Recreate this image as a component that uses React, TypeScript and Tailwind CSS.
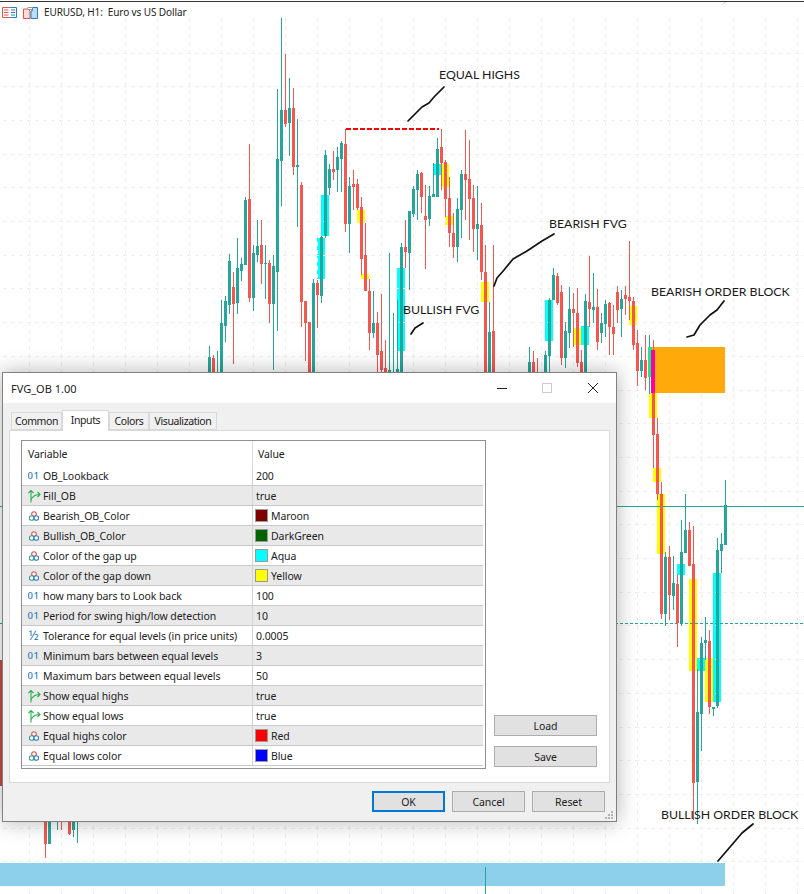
import React from "react";

const UI_FONT = "font-['Noto_Sans','Liberation_Sans',sans-serif]";
const RED = "#f4574f";
const TEAL = "#26a69a";

// x, high, low, body top, body bottom, colour (r / g)
type Candle = [number, number, number, number, number, "r" | "g"];

const candles: Candle[] = [
  [45, 800, 858, 800, 844, "r"], [49, 800, 844, 800, 844, "g"], [57, 800, 830, 0, 0, "g"], [61, 800, 830, 0, 0, "r"],
  [69, 800, 835, 800, 834, "r"], [73, 800, 837, 800, 830, "g"], [77, 800, 843, 0, 0, "g"],
  [209, 346, 400, 357, 400, "g"], [213, 355, 400, 358, 400, "r"], [217, 351, 400, 0, 0, "g"],
  [221, 300, 400, 323, 400, "g"], [225, 296, 342, 301, 326, "g"], [229, 254, 314, 261, 305, "g"],
  [233, 272, 364, 287, 304, "r"], [237, 238, 314, 268, 303, "g"], [241, 258, 281, 264, 271, "g"],
  [245, 197, 265, 200, 265, "g"], [249, 144, 302, 199, 298, "r"], [253, 245, 311, 253, 298, "g"],
  [257, 220, 262, 246, 255, "g"], [261, 220, 284, 245, 264, "r"], [265, 245, 299, 263, 264, "g"],
  [269, 260, 323, 263, 304, "r"], [273, 255, 370, 266, 304, "g"], [277, 89, 331, 159, 272, "g"],
  [281, 18, 206, 110, 161, "g"], [285, 54, 127, 110, 124, "r"], [289, 78, 156, 108, 123, "g"],
  [293, 88, 175, 108, 167, "r"], [297, 119, 227, 165, 167, "g"], [301, 182, 327, 185, 302, "r"],
  [305, 301, 361, 301, 323, "r"], [309, 322, 400, 322, 400, "r"], [313, 279, 400, 283, 400, "g"],
  [317, 280, 328, 283, 295, "r"], [321, 236, 303, 237, 296, "g"], [325, 150, 238, 155, 236, "g"],
  [329, 164, 195, 169, 188, "g"], [333, 151, 180, 169, 172, "r"], [337, 147, 192, 157, 170, "g"],
  [341, 141, 192, 143, 159, "g"], [345, 129, 232, 144, 224, "r"], [349, 177, 253, 186, 224, "g"],
  [353, 170, 210, 184, 187, "r"], [357, 179, 210, 184, 208, "r"], [361, 197, 275, 207, 259, "r"],
  [365, 223, 291, 255, 291, "r"], [369, 279, 350, 291, 333, "r"], [373, 291, 338, 323, 333, "g"],
  [377, 312, 400, 323, 355, "r"], [381, 294, 400, 351, 370, "r"], [385, 340, 400, 368, 400, "r"],
  [389, 253, 400, 370, 400, "g"], [393, 313, 400, 0, 0, "g"], [397, 300, 400, 369, 400, "g"],
  [401, 243, 400, 247, 400, "g"], [405, 220, 268, 247, 252, "r"], [409, 222, 290, 211, 253, "g"],
  [413, 186, 217, 189, 214, "g"], [417, 170, 220, 174, 190, "g"], [421, 172, 213, 173, 197, "r"],
  [425, 185, 269, 216, 220, "r"], [429, 186, 226, 196, 219, "g"], [433, 163, 197, 194, 197, "g"],
  [437, 138, 197, 149, 197, "g"], [441, 129, 190, 147, 163, "r"], [445, 160, 217, 162, 199, "r"],
  [449, 177, 247, 198, 233, "r"], [453, 213, 258, 233, 247, "r"], [457, 198, 262, 209, 247, "g"],
  [461, 170, 238, 174, 210, "g"], [465, 130, 220, 174, 180, "r"], [469, 140, 240, 179, 199, "r"],
  [473, 185, 252, 198, 229, "r"], [477, 186, 260, 224, 229, "g"], [481, 203, 280, 225, 272, "r"],
  [485, 245, 400, 272, 400, "r"], [489, 302, 400, 332, 400, "g"], [493, 245, 400, 331, 400, "r"],
  [529, 347, 400, 362, 400, "g"], [533, 351, 400, 362, 400, "r"], [537, 358, 400, 0, 0, "r"],
  [545, 351, 400, 355, 400, "g"], [549, 298, 400, 300, 356, "g"], [553, 268, 300, 275, 300, "g"],
  [557, 273, 305, 276, 303, "r"], [561, 285, 365, 292, 358, "r"], [565, 322, 368, 331, 358, "g"],
  [569, 287, 348, 309, 333, "g"], [573, 293, 347, 309, 313, "r"], [577, 288, 367, 313, 363, "r"],
  [581, 350, 400, 362, 400, "r"], [585, 294, 400, 301, 400, "g"], [589, 256, 327, 302, 309, "r"],
  [593, 273, 323, 307, 310, "g"], [597, 289, 350, 307, 342, "r"], [601, 313, 343, 323, 333, "g"],
  [605, 300, 337, 304, 324, "g"], [609, 302, 355, 303, 327, "r"], [613, 305, 355, 327, 334, "r"],
  [617, 286, 323, 292, 310, "r"], [621, 290, 337, 299, 309, "g"], [625, 286, 315, 295, 299, "r"],
  [629, 241, 320, 297, 301, "r"], [633, 297, 350, 301, 345, "r"], [637, 330, 386, 343, 371, "r"],
  [641, 347, 377, 360, 371, "g"], [645, 335, 390, 360, 378, "r"], [657, 418, 500, 434, 494, "r"],
  [653, 340, 468, 393, 435, "r"], [661, 482, 619, 494, 614, "r"], [665, 552, 626, 557, 614, "g"],
  [669, 546, 620, 557, 595, "r"], [673, 556, 610, 583, 596, "g"], [677, 575, 647, 584, 623, "r"],
  [681, 520, 626, 552, 623, "g"], [685, 494, 553, 530, 553, "g"], [689, 522, 566, 530, 566, "r"],
  [693, 526, 820, 564, 783, "r"], [697, 669, 824, 712, 782, "g"], [701, 637, 751, 643, 714, "g"],
  [705, 617, 660, 640, 643, "g"], [709, 630, 714, 641, 707, "r"], [713, 707, 716, 707, 709, "g"],
  [717, 538, 708, 550, 706, "g"], [721, 533, 573, 544, 551, "g"], [725, 480, 545, 505, 545, "g"],
];

// x, y, width, height of the gap boxes
const aqua = [
  [321, 195, 8, 41], [317, 238, 8, 41], [397, 268, 8, 83], [433, 164, 8, 11], [545, 300, 8, 41],
  [581, 326, 8, 19], [677, 564, 8, 11], [713, 573, 8, 129], [697, 658, 8, 13],
];
const yellow = [
  [357, 210, 8, 13], [361, 274, 8, 5], [441, 164, 8, 23], [445, 216, 8, 9], [481, 282, 8, 20], [573, 328, 8, 17],
  [629, 306, 8, 19], [649, 393, 8, 25], [653, 468, 8, 14], [657, 494, 8, 60], [689, 579, 8, 92], [705, 658, 8, 44],
];

const gridX = Array.from({ length: 25 }, (_, i) => 29 + i * 32);
const gridY = Array.from({ length: 25 }, (_, i) => Math.round(52.5 + i * 33.7));

const scribbles = [
  "M408 121 L415 114 L422 107 L429 103 L434 97 L444 87",
  "M494 286 L497 278 L504 270 L513 259 L527 251 L542 241 L554 234",
  "M411 334 L415 328 L423 323",
  "M687 337 L694 335 L700 325 L710 315 L717 310 L724 301",
  "M718 861 L730 847 L742 833 L753 824",
];

const Chart = () => (
  <svg className="absolute inset-0" width={804} height={894} shapeRendering="crispEdges">
    {aqua.map(([x, y, w, h]) => <rect key={`a${x}${y}`} x={x} y={y} width={w} height={h} fill="#00ffff" />)}
    {yellow.map(([x, y, w, h]) => <rect key={`y${x}${y}`} x={x} y={y} width={w} height={h} fill="#ffff00" />)}
    {gridX.map((x) => <line key={x} x1={x + 0.5} x2={x + 0.5} y1={18} y2={894} stroke="#eeeeee" strokeDasharray="4 4" />)}
    {gridY.map((y) => <line key={y} x1={3} x2={804} y1={y + 0.5} y2={y + 0.5} stroke="#eeeeee" strokeDasharray="4 4" />)}
    <rect x={652} y={347} width={73} height={46} fill="#ffa500" fillOpacity={0.96} />
    <rect x={0} y={863} width={725} height={23} fill="#87ceeb" fillOpacity={0.96} />
    <rect x={0} y={660} width={2} height={126} fill="#c94a48" />
    <line x1={0} x2={804} y1={506.5} y2={506.5} stroke={TEAL} />
    <line x1={0} x2={804} y1={623.5} y2={623.5} stroke={TEAL} strokeDasharray="3 2" />
    <rect x={485} y={867} width={1} height={27} fill={TEAL} />
    {candles.map(([x, high, low, top, bottom, c]) => {
      const fill = c === "r" ? RED : TEAL;
      return (
        <g key={x}>
          <rect x={x} y={high} width={1} height={low - high} fill={fill} />
          {bottom > top && <rect x={x - 1} y={top} width={3} height={bottom - top} fill={fill} />}
        </g>
      );
    })}
    {/* order block candles sit on top of the box */}
    <rect x={649} y={335} width={1} height={59} fill={TEAL} />
    <rect x={648} y={347} width={4} height={30} fill="#1fe68c" />
    <rect x={651} y={350} width={4} height={43} fill="#ff00a0" />
    <line x1={345.5} x2={345.5} y1={129} y2={144} stroke={RED} />
    <line x1={346} x2={439} y1={129} y2={129} stroke="#ff0000" strokeWidth={2} strokeDasharray="5 2" />
    <path d="M722 5 L725 1 L729 1 Z" fill="#dddddd" />
    {scribbles.map((d) => (
      <path key={d} d={d} fill="none" stroke="#111111" strokeWidth={1.7} strokeLinecap="round" strokeLinejoin="round" shapeRendering="auto" />
    ))}
  </svg>
);

const Note = ({ className, children }: { className: string; children: React.ReactNode }) => (
  <span className={`absolute whitespace-nowrap font-['Lato',sans-serif] text-[12.3px] leading-[18px] text-[#1a1a1a] ${className}`}>
    {children}
  </span>
);

const BoolIcon = () => (
  <svg width={14} height={14} viewBox="0 0 14 14" fill="none" stroke="#27ae4f" strokeWidth={1.1}>
    <path d="M4 13.5 V1.5 M1.4 4.2 L4 1.5 L6.6 4.2" />
    <path d="M4 10.5 C6 6.5 9 5.5 13 5.5 M10.5 3 L13 5.5 L10.5 8" />
  </svg>
);

const ColorIcon = () => (
  <svg width={10} height={10} viewBox="0 0 10 10" fill="#ffffff" strokeWidth={1.1}>
    <circle cx={5} cy={3} r={2.3} stroke="#e0524d" />
    <circle cx={2.7} cy={7} r={2.3} stroke="#2f9e8f" />
    <circle cx={7.3} cy={7} r={2.3} stroke="#2f7ec4" />
  </svg>
);

const RowIcon = ({ kind }: { kind: string }) => {
  if (kind === "bool") return <BoolIcon />;
  if (kind === "color") return <ColorIcon />;
  if (kind === "half") return <span className="text-[13px] leading-none text-[#2b7cbf]">½</span>;
  return <span className="text-[9.5px] font-medium leading-none tracking-[0.5px] text-[#2b7cbf]">01</span>;
};

const rows: { kind: string; name: string; value: string; swatch?: string }[] = [
  { kind: "int", name: "OB_Lookback", value: "200" },
  { kind: "bool", name: "Fill_OB", value: "true" },
  { kind: "color", name: "Bearish_OB_Color", value: "Maroon", swatch: "#800000" },
  { kind: "color", name: "Bullish_OB_Color", value: "DarkGreen", swatch: "#006400" },
  { kind: "color", name: "Color of the gap up", value: "Aqua", swatch: "#00ffff" },
  { kind: "color", name: "Color of the gap down", value: "Yellow", swatch: "#ffff00" },
  { kind: "int", name: "how many bars to Look back", value: "100" },
  { kind: "int", name: "Period for swing high/low detection", value: "10" },
  { kind: "half", name: "Tolerance for equal levels (in price units)", value: "0.0005" },
  { kind: "int", name: "Minimum bars between equal levels", value: "3" },
  { kind: "int", name: "Maximum bars between equal levels", value: "50" },
  { kind: "bool", name: "Show equal highs", value: "true" },
  { kind: "bool", name: "Show equal lows", value: "true" },
  { kind: "color", name: "Equal highs color", value: "Red", swatch: "#ff0000" },
  { kind: "color", name: "Equal lows color", value: "Blue", swatch: "#0000ff" },
];

const Btn = ({ label, className }: { label: string; className: string }) => (
  <div className={`flex items-center justify-center border border-[#adadad] bg-[#e1e1e1] pt-px ${className}`}>{label}</div>
);

const Tab = ({ label, active, className }: { label: string; active?: boolean; className: string }) => (
  <div
    className={`flex items-center justify-center border border-[#d9d9d9] tracking-[-0.4px] ${className} ${
      active ? "relative z-10 -mb-px h-[21px] border-b-0 bg-white pb-px" : "h-[18px] bg-[#f0f0f0] pt-px"
    }`}
  >
    {label}
  </div>
);

const Dialog = () => (
  <div className={`absolute left-[2px] top-[372px] flex h-[450px] w-[615px] flex-col border border-[#808080] bg-[#f0f0f0] text-[10.5px] leading-none tracking-[-0.08px] text-[#222222] shadow-[0_0_20px_rgba(0,0,0,0.3)] ${UI_FONT}`}>
    <div className="flex h-[30px] shrink-0 items-center justify-between bg-white pl-2 pr-[18px]">
      <span className="text-[11px] tracking-normal">FVG_OB 1.00</span>
      <div className="flex items-center">
        <div className="h-px w-[10px] bg-[#222222]" />
        <div className="ml-[35px] h-[10px] w-[10px] border border-[#cccccc]" />
        <svg className="ml-[36px]" width={10} height={10} viewBox="0 0 10 10" stroke="#222222" strokeWidth={1}>
          <path d="M0 0 L10 10 M10 0 L0 10" />
        </svg>
      </div>
    </div>
    <div className="flex h-[27px] shrink-0 items-end pl-2">
      <Tab label="Common" className="w-[51px]" />
      <Tab label="Inputs" active className="w-[47px]" />
      <Tab label="Colors" className="w-[40px]" />
      <Tab label="Visualization" className="w-[68px]" />
    </div>
    <div className="mx-[6px] flex h-[353px] shrink-0 border border-[#d9d9d9] bg-white pl-[11px] pt-[9px]">
      <div className="flex h-[329px] w-[465px] flex-col border border-[#8c8f98] pr-[2px]">
        <div className="flex h-[25px] shrink-0 items-center">
          <span className="flex h-full w-[231px] items-center border-r border-[#dddddd] pl-[6px] pt-px">Variable</span>
          <span className="pl-[5px] pt-px">Value</span>
        </div>
        {rows.map((r, i) => (
          <div key={r.name} className={`flex h-5 shrink-0 items-center border-b border-[#c8c8c8] ${i % 2 ? "bg-[#e9e9e9]" : "bg-white"}`}>
            <div className="flex h-full w-[231px] items-center border-r border-[#d4d4d4]">
              <span className="flex w-[21px] shrink-0 items-center justify-center pl-[2px]">
                <RowIcon kind={r.kind} />
              </span>
              <span className="whitespace-nowrap pt-px">{r.name}</span>
            </div>
            <div className="flex items-center pl-[3px]">
              {r.swatch && <span className="-ml-px mr-[3px] h-[13px] w-[13px] border border-[#999999]" style={{ background: r.swatch }} />}
              <span className="pt-px">{r.value}</span>
            </div>
          </div>
        ))}
      </div>
      <div className="ml-2 flex h-[328px] flex-col justify-end gap-[10px] pb-[1px]">
        <Btn label="Load" className="h-[21px] w-[103px]" />
        <Btn label="Save" className="h-[21px] w-[103px]" />
      </div>
    </div>
    <div className="flex flex-1 items-start justify-end gap-[7px] pr-[11px] pt-2">
      <div className="flex h-[21px] w-[73px] items-center justify-center border-2 border-[#0078d7] bg-[#e1e1e1] pt-px">OK</div>
      <Btn label="Cancel" className="h-[21px] w-[73px]" />
      <Btn label="Reset" className="h-[21px] w-[73px]" />
    </div>
    <svg className="absolute bottom-[1px] right-[2px]" width={9} height={9} fill="#b5b5b5">
      <rect x={6} y={0} width={2} height={2} />
      <rect x={3} y={3} width={2} height={2} />
      <rect x={6} y={3} width={2} height={2} />
      <rect x={0} y={6} width={2} height={2} />
      <rect x={3} y={6} width={2} height={2} />
      <rect x={6} y={6} width={2} height={2} />
    </svg>
  </div>
);

const App = () => {
  return (
    <div className="relative h-[894px] w-[804px] overflow-hidden bg-white">
      <Chart />
      <div className={`relative mt-px flex h-[22px] items-center border-t border-[#333333] pl-[2px] text-[10px] tracking-[-0.1px] text-[#222222] ${UI_FONT}`}>
        <svg width={15} height={11} viewBox="0 0 15 11" fill="none" strokeWidth={1}>
          <path d="M7.5 .5 H.5 V10.5 H7.5 M2 3 H6.5 M2 5.5 H6.5 M2 8 H6.5" stroke="#e0524d" />
          <path d="M7.5 .5 H14.5 V10.5 H7.5 M9 3 H13 M9 5.5 H13 M9 8 H13" stroke="#2b7cbf" />
        </svg>
        <svg className="ml-[6px]" width={15} height={12} viewBox="0 0 15 12">
          <path d="M.5 2 H5.5 L7 4 V11.5 H.5 Z" fill="#fbdcd8" stroke="#e0524d" />
          <path d="M9.5 3.5 V.5 H14.5 V11.5 H8 V4 Z" fill="#bcdcf5" stroke="#2b7cbf" />
          <rect x={5} y={0.5} width={4} height={2} fill="#ffffff" stroke="#999999" />
        </svg>
        <span className="ml-[6px] whitespace-pre">EURUSD, H1:  Euro vs US Dollar</span>
      </div>
      <Note className="left-[439px] top-[66px]">EQUAL HIGHS</Note>
      <Note className="left-[549px] top-[215px]">BEARISH FVG</Note>
      <Note className="left-[403px] top-[301px]">BULLISH FVG</Note>
      <Note className="left-[651px] top-[283px]">BEARISH ORDER BLOCK</Note>
      <Note className="left-[661px] top-[806px]">BULLISH ORDER BLOCK</Note>
      <Dialog />
    </div>
  );
};

export default App;
